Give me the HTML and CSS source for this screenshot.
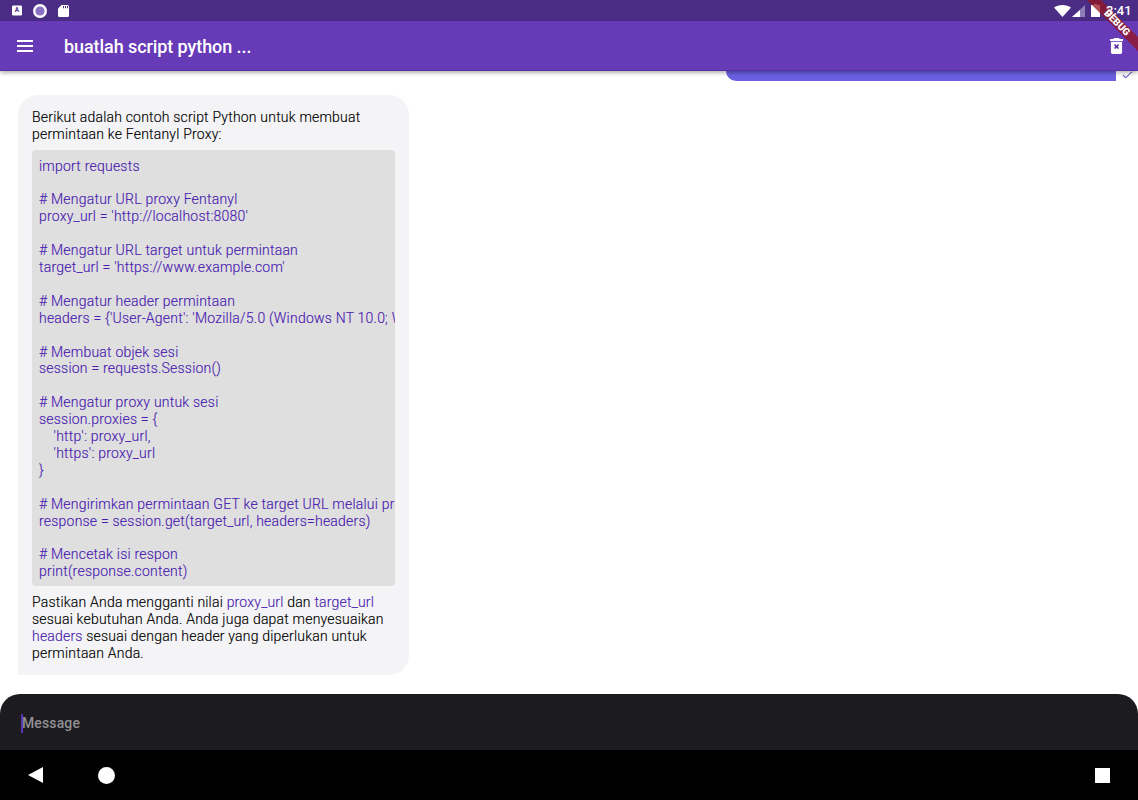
FILE: index.html
```html
<!DOCTYPE html>
<html lang="id">
<head>
<meta charset="utf-8">
<title>Chat</title>
<link rel="stylesheet" href="styles.css">
</head>
<body>
<div class="app">
  <div class="status">
    <div class="status-left">
      <svg class="st-a" viewBox="0 0 11 11"><rect width="11" height="11" rx="1.5" fill="#fff"/><text x="5.5" y="7.6" class="st-a-text">A</text></svg>
      <svg class="st-c" viewBox="0 0 14 14"><circle cx="7" cy="7" r="7" fill="#fff"/><circle cx="7" cy="7" r="4.6" fill="#8a70c0"/></svg>
      <svg class="st-sd" viewBox="0 0 11 12"><path d="M3.5 0H9.5A1.5 1.5 0 0 1 11 1.5V10.5A1.5 1.5 0 0 1 9.5 12H1.5A1.5 1.5 0 0 1 0 10.5V3.5Z" fill="#fff"/><path d="M5 1h1v2.2H5zM7 1h1v2.2H7zM9 1h1v2.2H9z" fill="#4b2d85"/></svg>
    </div>
    <div class="status-right">
      <svg class="st-wifi" viewBox="0 0 17 12"><path d="M0 2.6C2.3 .9 5.2 0 8.5 0S14.7 .9 17 2.6L8.5 12Z" fill="#fff"/></svg>
      <svg class="st-cell" viewBox="0 0 13 12"><path d="M13 0V12H0Z" fill="#8f7db5"/><path d="M8 5V12H0Z" fill="#fff"/></svg>
      <svg class="st-bat" viewBox="0 0 9 13"><path d="M3 0H6V1H9V13H0V1H3Z" fill="#fff"/></svg>
      <span class="clock">3:41</span>
    </div>
  </div>
  <header class="bar">
    <svg class="menu" viewBox="0 0 16 12"><path d="M0 0H16V2H0ZM0 5H16V7H0ZM0 10H16V12H0Z" fill="#fff"/></svg>
    <h1 class="title">buatlah script python ...</h1>
    <svg class="trash" viewBox="0 0 14 17"><path d="M4.500 0H9.500L10.500 1H14V3H0V1H3.500ZM1 4H13V15.500A1.500 1.500 0 0 1 11.500 17H2.500A1.500 1.500 0 0 1 1 15.500Z" fill="#fff"/><path d="M4.300 7.600L5.500 6.400L7 7.900L8.500 6.400L9.700 7.600L8.200 9.100L9.700 10.600L8.500 11.800L7 10.300L5.500 11.800L4.300 10.600L5.800 9.100Z" fill="#5a2ea6"/></svg>
  </header>
  <div class="ribbon"><span>DEBUG</span></div>
  <main class="chat">
    <div class="sent-row">
      <div class="sent"></div>
      <div class="tick-col"><svg class="tick" viewBox="0 0 12 9"><path d="M1 4.500L4 7.500L11 1" fill="none" stroke="#6d63c9" stroke-width="1.200"/></svg></div>
    </div>
    <article class="bubble">
      <p class="para">Berikut adalah contoh script Python untuk membuat permintaan ke Fentanyl Proxy:</p>
      <div class="code-wrap">
<pre class="code">import requests

# Mengatur URL proxy Fentanyl
proxy_url = 'http://localhost:8080'

# Mengatur URL target untuk permintaan
target_url = 'https://www.example.com'

# Mengatur header permintaan
headers = {'User-Agent': 'Mozilla/5.0 (Windows NT 10.0; Win64; x64)'}

# Membuat objek sesi
session = requests.Session()

# Mengatur proxy untuk sesi
session.proxies = {
    'http': proxy_url,
    'https': proxy_url
}

# Mengirimkan permintaan GET ke target URL melalui proxy
response = session.get(target_url, headers=headers)

# Mencetak isi respon
print(response.content)</pre>
      </div>
      <p class="para">Pastikan Anda mengganti nilai <span class="inline">proxy_url</span> dan <span class="inline">target_url</span> sesuai kebutuhan Anda. Anda juga dapat menyesuaikan <span class="inline">headers</span> sesuai dengan header yang diperlukan untuk permintaan Anda.</p>
    </article>
  </main>
  <footer class="composer">
    <span class="caret"></span><span class="placeholder">Message</span>
  </footer>
  <nav class="nav">
    <svg class="nav-back" viewBox="0 0 15 16"><path d="M15 0V16L0 8Z" fill="#fff"/></svg>
    <span class="nav-home"></span>
    <span class="nav-recent"></span>
  </nav>
</div>
</body>
</html>
```
FILE: styles.css
```css
* { box-sizing: border-box; }
html, body { margin: 0; padding: 0; }
body { font-family: Roboto, "Liberation Sans", sans-serif; background: #fff; }
.app { position: relative; width: 1138px; height: 800px; overflow: hidden; display: flex; flex-direction: column; background: #fff; }

.status { height: 21px; flex: none; background: #4b2d85; display: flex; justify-content: space-between; align-items: center; padding: 0 7px 0 12px; }
.status-left { display: flex; align-items: center; gap: 11px; }
.st-a { width: 10px; height: 11px; display: block; }
.st-a-text { font: 700 7px Roboto, sans-serif; fill: #4b2d85; text-anchor: middle; }
.st-c { width: 14px; height: 14px; display: block; }
.st-sd { width: 11px; height: 12px; display: block; }
.status-right { display: flex; align-items: center; }
.st-wifi { width: 17px; height: 12px; display: block; margin-right: 1px; }
.st-cell { width: 13px; height: 12px; display: block; margin-right: 6px; }
.st-bat { width: 9px; height: 13px; display: block; margin-right: 6px; }
.clock { color: #fff; font-size: 13px; font-weight: 500; width: 25px; position: relative; z-index: 4; }

.bar { height: 50px; flex: none; background: #673ab7; display: flex; align-items: center; padding: 0 15px 0 17px; position: relative; z-index: 2; box-shadow: 0 2px 4px rgba(0,0,0,.3); border-bottom: 1px solid #5a2ea6; }
.menu { width: 16px; height: 12px; display: block; }
.title { margin: 2px 0 0 31px; flex: 1; color: #fff; font-size: 18px; font-weight: 500; line-height: 50px; letter-spacing: -.08px; }
.trash { width: 13px; height: 16px; display: block; }

.ribbon { position: absolute; top: 0; right: 0; width: 0; height: 0; z-index: 3; }
.ribbon span { position: absolute; left: -71px; top: 18px; width: 100px; height: 10px; background: rgba(150,20,30,.75); color: #fff; font: 900 10px/10px Roboto, sans-serif; text-align: center; transform: rotate(45deg); }

.chat { flex: 1; min-height: 0; display: flex; flex-direction: column; align-items: flex-start; }
.sent-row { align-self: stretch; height: 9px; display: flex; justify-content: flex-end; }
.sent { width: 390px; height: 10px; background: #6a5fe0; border-radius: 0 0 0 20px; }
.tick-col { width: 22px; height: 9px; display: flex; justify-content: flex-start; padding-left: 6px; }
.tick { width: 11px; height: 8px; display: block; }

.bubble { margin: 15px 0 0 18px; width: 391px; height: 580px; background: #f4f4f6; border-radius: 20px 20px 20px 0; padding: 14px 14px 0; color: #000; font-size: 14px; font-weight: 300; line-height: 17px; letter-spacing: .2px; -webkit-text-stroke: .15px; }
.para { margin: 0; }
.code-wrap { margin: 7px 0 8px; height: 436px; background: #dfdfdf; border-radius: 4px; overflow: hidden; padding: 7.600px 0 0 7px; }
.code { margin: 0; font-family: Roboto, sans-serif; font-size: 14px; font-weight: 300; line-height: 16.900px; letter-spacing: .22px; color: #4a1cb0; white-space: pre; }
.inline { color: #4a1cb0; }

.composer { position: absolute; left: 0; right: 0; top: 694px; height: 56px; background: #1c1b20; border-radius: 20px 20px 0 0; display: flex; align-items: center; padding: 2px 0 0 21px; }
.caret { width: 2px; height: 19px; background: #5a33b8; margin-right: -1px; }
.placeholder { color: #909094; font-size: 14px; font-weight: 500; letter-spacing: .13px; }

.nav { position: absolute; left: 0; right: 0; top: 750px; height: 50px; background: #000; }
.nav-back { position: absolute; left: 28px; top: 17px; width: 15px; height: 16px; }
.nav-home { position: absolute; left: 98px; top: 17px; width: 17px; height: 17px; border-radius: 50%; background: #fff; }
.nav-recent { position: absolute; left: 1095px; top: 18px; width: 15px; height: 15px; background: #fff; }
```
